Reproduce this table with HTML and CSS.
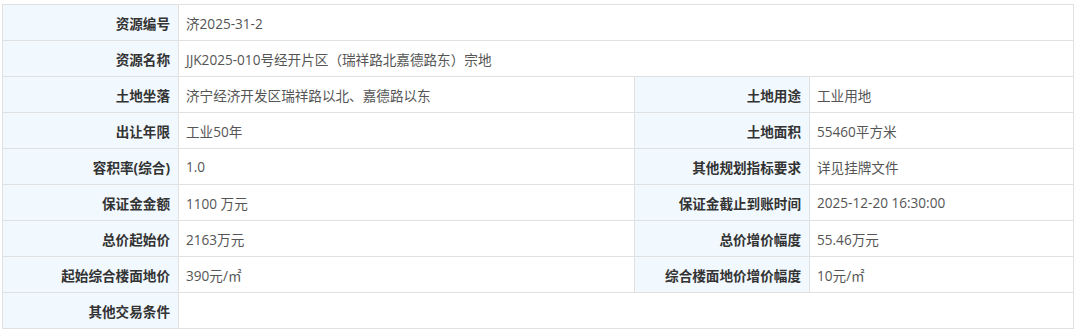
FILE: index.html
```html
<!DOCTYPE html>
<html lang="zh-CN">
<head>
<meta charset="utf-8">
<title>资源信息</title>
<link rel="stylesheet" href="styles.css">
</head>
<body>
<div class="info-grid">
  <div class="label">资源编号</div>
  <div class="value span3">济2025-31-2</div>

  <div class="label">资源名称</div>
  <div class="value span3">JJK2025-010号经开片区（瑞祥路北嘉德路东）宗地</div>

  <div class="label">土地坐落</div>
  <div class="value">济宁经济开发区瑞祥路以北、嘉德路以东</div>
  <div class="label">土地用途</div>
  <div class="value">工业用地</div>

  <div class="label">出让年限</div>
  <div class="value">工业50年</div>
  <div class="label">土地面积</div>
  <div class="value">55460平方米</div>

  <div class="label">容积率(综合)</div>
  <div class="value">1.0</div>
  <div class="label">其他规划指标要求</div>
  <div class="value">详见挂牌文件</div>

  <div class="label">保证金金额</div>
  <div class="value">1100 万元</div>
  <div class="label">保证金截止到账时间</div>
  <div class="value">2025-12-20 16:30:00</div>

  <div class="label">总价起始价</div>
  <div class="value">2163万元</div>
  <div class="label">总价增价幅度</div>
  <div class="value">55.46万元</div>

  <div class="label">起始综合楼面地价</div>
  <div class="value">390元/㎡</div>
  <div class="label">综合楼面地价增价幅度</div>
  <div class="value">10元/㎡</div>

  <div class="label">其他交易条件</div>
  <div class="value span3"></div>
</div>
</body>
</html>
```

FILE: styles.css
```css
html, body {
  margin: 0;
  padding: 0;
  background: #ffffff;
}

body {
  padding: 4px 0 0 2px;
  font-family: "Open Sans", "Noto Sans CJK SC", sans-serif;
  font-size: 13.6px;
}

.info-grid {
  display: grid;
  grid-template-columns: 175px 455px 174px 263px;
  grid-auto-rows: 35px;
  gap: 1px;
  padding: 1px;
  width: 1072px;
  box-sizing: border-box;
  background: #e1e1e1;
}

.label,
.value {
  display: flex;
  align-items: center;
  white-space: nowrap;
  overflow: hidden;
}

.label {
  justify-content: flex-end;
  padding-right: 8px;
  background: #f1f8fe;
  color: #333333;
  font-weight: 700;
}

.value {
  padding-left: 7px;
  background: #ffffff;
  color: #555555;
}

.span3 {
  grid-column: span 3;
}
```
